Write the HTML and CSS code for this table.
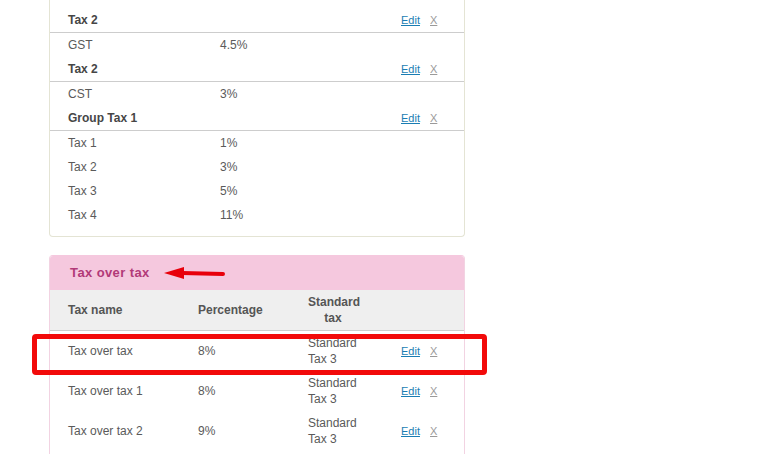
FILE: index.html
```html
<!DOCTYPE html>
<html>
<head>
<meta charset="utf-8">
<link rel="stylesheet" href="styles.css">
</head>
<body>
<div class="page">
  <div class="card card-std">
    <div class="row head">
      <span>Tax 2</span><span></span>
      <a class="edit" href="#">Edit</a><a class="del" href="#">X</a>
    </div>
    <div class="row"><span>GST</span><span>4.5%</span></div>
    <div class="row head">
      <span>Tax 2</span><span></span>
      <a class="edit" href="#">Edit</a><a class="del" href="#">X</a>
    </div>
    <div class="row"><span>CST</span><span>3%</span></div>
    <div class="row head">
      <span>Group Tax 1</span><span></span>
      <a class="edit" href="#">Edit</a><a class="del" href="#">X</a>
    </div>
    <div class="row"><span>Tax 1</span><span>1%</span></div>
    <div class="row"><span>Tax 2</span><span>3%</span></div>
    <div class="row"><span>Tax 3</span><span>5%</span></div>
    <div class="row"><span>Tax 4</span><span>11%</span></div>
  </div>

  <div class="card card-tot">
    <div class="tot-title">Tax over tax</div>
    <svg class="arrow" width="64" height="16" viewBox="0 0 64 16">
      <path d="M1 8 L21 2 L21 14 Z" fill="#e8000b"/>
      <path d="M19 8 L60 9" stroke="#e8000b" stroke-width="4" stroke-linecap="round"/>
    </svg>
    <div class="trow thead">
      <span>Tax name</span><span>Percentage</span><span class="std-h">Standard<br>tax</span><span></span><span></span>
    </div>
    <div class="trow">
      <span>Tax over tax</span><span>8%</span><span class="std">Standard<br>Tax 3</span>
      <a class="edit" href="#">Edit</a><a class="del" href="#">X</a>
    </div>
    <div class="trow">
      <span>Tax over tax 1</span><span>8%</span><span class="std">Standard<br>Tax 3</span>
      <a class="edit" href="#">Edit</a><a class="del" href="#">X</a>
    </div>
    <div class="trow">
      <span>Tax over tax 2</span><span>9%</span><span class="std">Standard<br>Tax 3</span>
      <a class="edit" href="#">Edit</a><a class="del" href="#">X</a>
    </div>
    <div class="highlight"></div>
  </div>
</div>
</body>
</html>
```

FILE: styles.css
```css
* { box-sizing: border-box; }
html, body {
  margin: 0;
  padding: 0;
  background: #ffffff;
}
body {
  font-family: "Liberation Sans", Arial, sans-serif;
  font-size: 12px;
  color: #5a5a5a;
}
.page {
  padding-left: 49px;
  width: 465px;
  box-sizing: content-box;
}
.card {
  width: 416px;
  border: 1px solid #e4e4d4;
}
.card-std {
  border-top: none;
  border-radius: 0 0 4px 4px;
  padding: 8px 0 9px;
}
.row {
  display: grid;
  grid-template-columns: 152px 1fr 29px 34px;
  align-items: center;
  height: 24px;
  padding-left: 18px;
}
.row.head {
  height: 25px;
  border-bottom: 1px solid #cdcdcd;
  font-weight: bold;
  color: #464646;
}
.edit {
  color: #1a7db3;
  text-decoration: underline;
  font-weight: normal;
  font-size: 11px;
}
.del {
  color: #9a9a9a;
  text-decoration: underline;
  font-weight: normal;
  font-size: 11px;
}
.card-tot {
  position: relative;
  margin-top: 18px;
  border-color: #f2d3e2;
  border-top-color: #f5c8de;
  border-radius: 4px 4px 0 0;
  border-bottom: none;
  padding-bottom: 20px;
}
.tot-title {
  background: #f5c8de;
  height: 34px;
  line-height: 34px;
  padding-left: 20px;
  font-size: 13px;
  font-weight: bold;
  letter-spacing: 0.4px;
  color: #b23a78;
  border-radius: 3px 3px 0 0;
}
.arrow {
  position: absolute;
  left: 113px;
  top: 9px;
}
.trow {
  display: grid;
  grid-template-columns: 130px 110px 93px 29px 34px;
  align-items: center;
  height: 40px;
  padding-left: 18px;
}
.trow .std { line-height: 16px; }
.thead {
  height: 41px;
  background: #efefef;
  border-bottom: 1px solid #cdcdcd;
  font-weight: bold;
  color: #555555;
}
.std-h {
  line-height: 16px;
  text-align: center;
  width: 50px;
}
.highlight {
  position: absolute;
  left: -18px;
  top: 78px;
  width: 455px;
  height: 41px;
  border: 5px solid #f20a0a;
  border-radius: 4px;
}
```
